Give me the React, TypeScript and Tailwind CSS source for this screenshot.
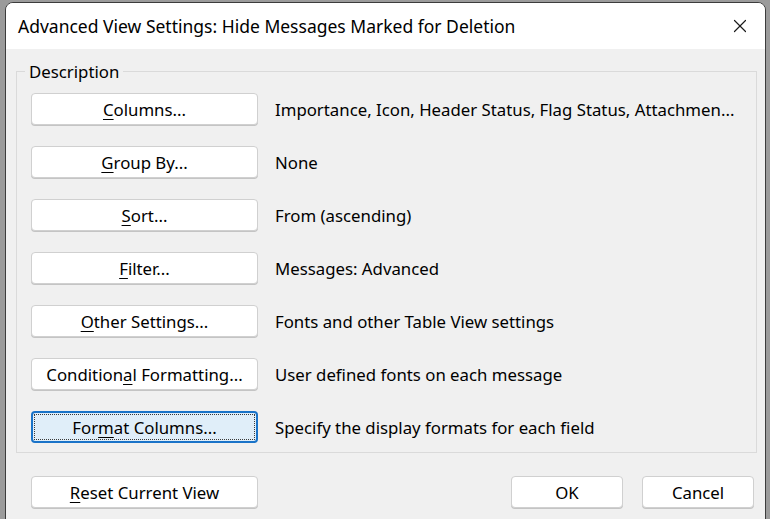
import { X } from "lucide-react";

type Row = {
	label: [string, string, string];
	desc: string;
	focused?: boolean;
};

const rows: Row[] = [
	{ label: ["", "C", "olumns..."], desc: "Importance, Icon, Header Status, Flag Status, Attachmen..." },
	{ label: ["", "G", "roup By..."], desc: "None" },
	{ label: ["", "S", "ort..."], desc: "From (ascending)" },
	{ label: ["", "F", "ilter..."], desc: "Messages: Advanced" },
	{ label: ["", "O", "ther Settings..."], desc: "Fonts and other Table View settings" },
	{ label: ["Condition", "a", "l Formatting..."], desc: "User defined fonts on each message" },
	{ label: ["For", "m", "at Columns..."], desc: "Specify the display formats for each field", focused: true },
];

function Label({ parts }: { parts: [string, string, string] }) {
	return (
		<span>
			{parts[0]}
			<span className="underline underline-offset-[3px]">{parts[1]}</span>
			{parts[2]}
		</span>
	);
}

function DlgButton({
	children,
	focused,
	className = "",
}: {
	children: React.ReactNode;
	focused?: boolean;
	className?: string;
}) {
	if (focused) {
		return (
			<button className={`h-[32px] rounded-[4px] border-2 border-[#1a73c8] bg-[#e0eef9] p-[1px] text-black ${className}`}>
				<div className="flex h-full w-full items-center justify-center border border-dotted border-[#3a3a3a]">
					{children}
				</div>
			</button>
		);
	}
	return (
		<button
			className={`flex h-[32px] items-center justify-center rounded-[4px] border border-[#d0d0d0] bg-white text-black shadow-[0_1px_0_#c4c4c4] ${className}`}
		>
			{children}
		</button>
	);
}

export default function App() {
	return (
		<div
			className="h-[519px] w-[770px] overflow-hidden bg-[#9b9b9b] pl-[5px] pt-[2px]"
			style={{ fontFamily: '"Noto Sans", "Open Sans", sans-serif' }}
		>
			<div className="flex h-[540px] w-[761px] flex-col overflow-hidden rounded-t-[8px] border border-[#3c3c3c] bg-[#f0f0f0]">
				<div className="flex h-[46px] shrink-0 items-center justify-between bg-white pl-[12px] pr-[14px]">
					<span className="text-[17.5px] text-black">Advanced View Settings: Hide Messages Marked for Deletion</span>
					<X className="h-[22px] w-[22px] text-[#1b1b1b]" strokeWidth={1.3} />
				</div>
				<div className="flex flex-col px-[10px] pr-[8px] pt-[10px] text-[16.8px] text-black">
					<fieldset className="border border-[#dadada] px-[14px] pb-[9px] pt-[9px]">
						<legend className="ml-[-6px] px-[4px] text-black">Description</legend>
						<div className="flex flex-col gap-[21px]">
							{rows.map((r) => (
								<div key={r.desc} className="flex items-center gap-[17px]">
									<DlgButton focused={r.focused} className="w-[227px] shrink-0">
										<Label parts={r.label} />
									</DlgButton>
									<span className="whitespace-nowrap">{r.desc}</span>
								</div>
							))}
						</div>
					</fieldset>
					<div className="mt-[23px] flex items-center pl-[15px] pr-[3px]">
						<DlgButton className="w-[227px]">
							<Label parts={["", "R", "eset Current View"]} />
						</DlgButton>
						<div className="ml-auto flex gap-[19px]">
							<DlgButton className="w-[112px]">OK</DlgButton>
							<DlgButton className="w-[112px]">Cancel</DlgButton>
						</div>
					</div>
				</div>
			</div>
		</div>
	);
}
